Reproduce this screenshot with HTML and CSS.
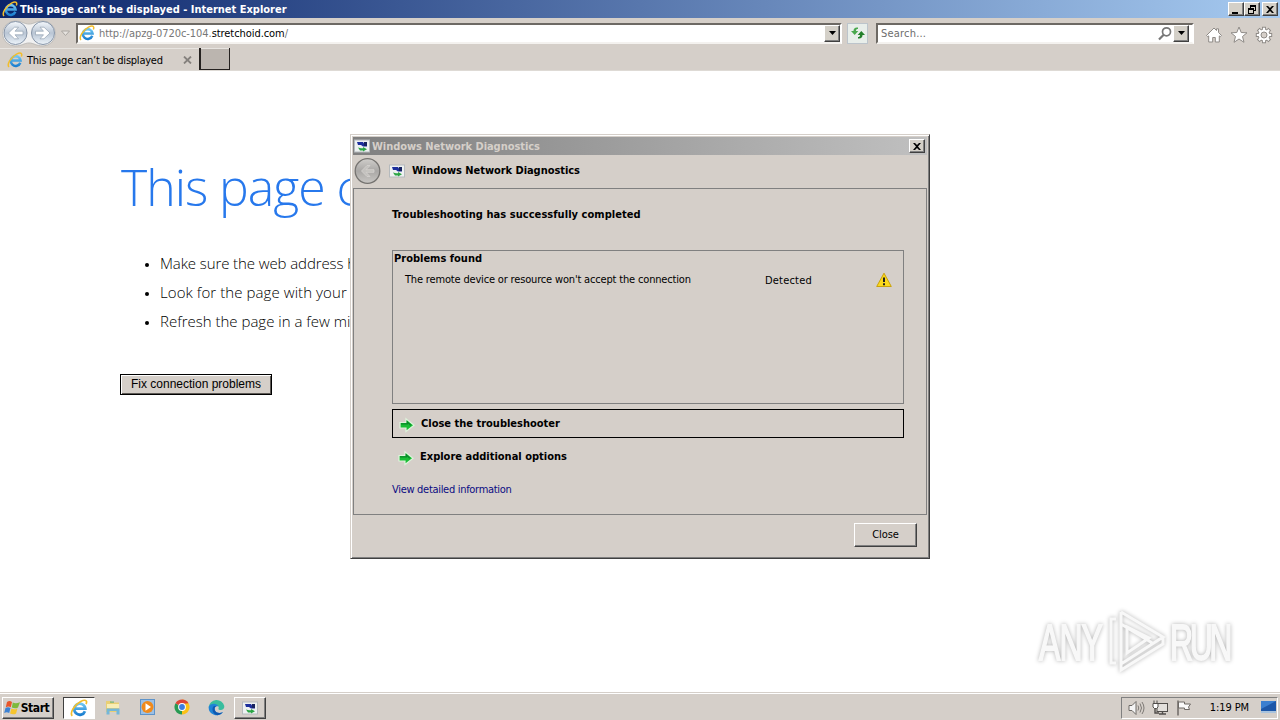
FILE: index.html
```html
<!DOCTYPE html>
<html lang="en">
<head>
    <meta charset="UTF-8">
    <title>This page can't be displayed</title>
    <link rel="stylesheet" href="styles.css">
</head>
<body>
    <svg class="defs" width="0" height="0">
        <defs>
            <linearGradient id="ie-blue" x1="0" y1="0" x2="0" y2="1">
                <stop offset="0" stop-color="#6fc6f2"/>
                <stop offset="1" stop-color="#1c7fd0"/>
            </linearGradient>
            <linearGradient id="orb" x1="0" y1="0" x2="0" y2="1">
                <stop offset="0" stop-color="#f4f8fc"/>
                <stop offset="0.5" stop-color="#b9c5d4"/>
                <stop offset="1" stop-color="#edf4fa"/>
            </linearGradient>
            <linearGradient id="orb-off" x1="0" y1="0" x2="0" y2="1">
                <stop offset="0" stop-color="#d0cecb"/>
                <stop offset="0.5" stop-color="#a9a7a5"/>
                <stop offset="1" stop-color="#c9c7c4"/>
            </linearGradient>
        </defs>
        <symbol id="ie" viewBox="0 0 16 16">
            <path d="M13.300 10.800A4.900 4.900 0 1 1 13.600 8.600H5" fill="none" stroke="url(#ie-blue)" stroke-width="2.500"/>
            <path d="M2 15C-.5 12.500 4 5 9.500 2.200c3.800-2 6.300-1.200 4.800 2.300" fill="none" stroke="#f2bd2c" stroke-width="1.500"/>
        </symbol>
        <symbol id="diag" viewBox="0 0 16 16">
            <rect x="0.500" y="2" width="15" height="12" fill="#eef1f1" stroke="#b5babd"/>
            <path d="M3 4h6l1 1.500h3V8.500H9L7 7H4z" fill="#1c2e9c"/>
            <path d="M10 4h3v4h-3z" fill="#17235f"/>
            <path d="M4 9.500l3 .8h2V9l4 2.300-4 2.200v-1H6z" fill="#2aa544"/>
        </symbol>
        <symbol id="go" viewBox="0 0 16 16">
            <path d="M1 5.500H7V1.800L15 8.200 7 14.500V11H1z" fill="#19bd35" stroke="#dff3dc" stroke-width="1.200"/>
            <path d="M2 6.800h6.300V5l3.500 3.200" fill="none" stroke="#0a8a2a" stroke-width="1.300"/>
        </symbol>
        <symbol id="close-x" viewBox="0 0 8 7">
            <path d="M0 0h2l2 2 2-2h2L5 3.500 8 7H6L4 5 2 7H0l3-3.500z"/>
        </symbol>
    </svg>

    <div class="desktop">
        <header class="titlebar">
            <svg class="icon16"><use href="#ie"/></svg>
            <span class="titlebar-text">This page can’t be displayed - Internet Explorer</span>
            <div class="win-buttons">
                <span class="win-btn"><svg width="10" height="9"><path d="M1 7h6v2H1z"/></svg></span>
                <span class="win-btn"><svg width="10" height="9"><path d="M3 0h6v6H7V5h1V2H4v1H3zM1 3h6v6H1zM2 5v3h4V5z" fill-rule="evenodd"/></svg></span>
                <span class="win-btn win-btn-close"><svg width="8" height="7"><use href="#close-x"/></svg></span>
            </div>
        </header>

        <nav class="navbar">
            <svg class="orbs" width="74" height="28" viewBox="0 0 74 28">
                <path d="M15 2c7 0 9 3 14 3s7-3 14-3a12.500 12.500 0 0 1 0 25c-7 0-9-3-14-3s-7 3-14 3a12.500 12.500 0 0 1 0-25z" fill="#f1f1f1" stroke="#bdbbb8"/>
                <circle cx="15.500" cy="14" r="11.500" fill="url(#orb)" stroke="#8795a8"/>
                <circle cx="43" cy="14" r="11.500" fill="url(#orb)" stroke="#8795a8"/>
                <path d="M23 12.200h-8l3.500-4H14.500L8.500 14l6 5.800h4l-3.500-4h8z" fill="#fff" stroke="#94a2b2" stroke-width="0.700"/>
                <path d="M35.500 12.200h8l-3.500-4h4l6 5.800-6 5.800h-4l3.500-4h-8z" fill="#fff" stroke="#94a2b2" stroke-width="0.700"/>
                <path d="M61.500 12h8l-4 4.500z" fill="#e6e3df" stroke="#aaa6a1"/>
            </svg>
            <div class="field address">
                <svg class="icon16"><use href="#ie"/></svg>
                <span class="url">http://apzg-0720c-104.<b>stretchoid.com</b>/</span>
                <span class="drop"><svg width="7" height="4"><path d="M0 0h7L3.500 4z"/></svg></span>
            </div>
            <span class="refresh">
                <svg width="16" height="14" viewBox="0 0 16 14">
                    <path d="M8 1.500C5 1 3.500 2.500 3.500 5H1l3.700 4L8.300 5H6C6 3.500 6.500 3 8 3z" fill="#4aa84e"/>
                    <path d="M8 12.500c3 .5 4.500-1 4.500-3.500H15l-3.700-4L7.700 9H10c0 1.500-.5 2-2 2z" fill="#23802b"/>
                </svg>
            </span>
            <div class="field search">
                <span class="search-text">Search...</span>
                <svg width="15" height="15" viewBox="0 0 15 15"><circle cx="8.500" cy="5.800" r="4" fill="none" stroke="#777" stroke-width="1.700"/><path d="M5.700 8.800L1 13.500" stroke="#777" stroke-width="2.200"/></svg>
                <span class="drop"><svg width="7" height="4"><path d="M0 0h7L3.500 4z"/></svg></span>
            </div>
            <div class="tools">
                <svg width="18" height="18" viewBox="0 0 18 18"><path d="M1.500 9.500L9 2l2.500 2.500V2.800h2v3.700l3 3-1.300 1.200-.9-.8V16h-4v-4.500H7.700V16h-4V9.900l-.9.8z" fill="#fff" stroke="#8f8b87"/></svg>
                <svg width="18" height="18" viewBox="0 0 18 18"><path d="M9 1l2.200 5.500 5.800.3-4.500 3.700 1.500 5.800L9 13l-5 3.300 1.500-5.800L1 6.800l5.800-.3z" fill="#fff" stroke="#8f8b87"/></svg>
                <svg width="18" height="18" viewBox="0 0 18 18">
                    <g id="cog" stroke-linecap="butt">
                        <path d="M9 .8v16.400M.8 9h16.400M3.200 3.200l11.600 11.600M14.800 3.200L3.200 14.800" stroke="#8f8b87" stroke-width="4"/>
                        <circle cx="9" cy="9" r="6.300" fill="#8f8b87"/>
                        <path d="M9 1.800v14.400M1.800 9h14.400M3.900 3.900l10.200 10.200M14.100 3.900L3.900 14.100" stroke="#fff" stroke-width="2.200"/>
                        <circle cx="9" cy="9" r="5.400" fill="#fff"/>
                        <circle cx="9" cy="9" r="3" fill="#d5cfc9" stroke="#8f8b87"/>
                    </g>
                </svg>
            </div>
        </nav>

        <div class="tabs">
            <div class="tab">
                <svg class="icon16"><use href="#ie"/></svg>
                <span class="tab-text">This page can’t be displayed</span>
                <svg width="9" height="8" viewBox="0 0 9 8"><path d="M1 .5l7 7M8 .5l-7 7" stroke="#85817d" stroke-width="1.800"/></svg>
            </div>
            <div class="new-tab"></div>
        </div>

        <main class="page">
            <h1>This page c</h1>
            <ul>
                <li class="tip-address">Make sure the web address h</li>
                <li class="tip-search">Look for the page with your</li>
                <li>Refresh the page in a few mi</li>
            </ul>
            <button class="fix" type="button">Fix connection problems</button>
        </main>

        <footer class="taskbar">
            <div class="start">
                <svg width="17" height="16" viewBox="0 0 17 16">
                    <path d="M3 2c2-1.500 3.500-1 5 0L6.800 7.200c-1.600-1-3.200-1-5 0z" fill="#e8562a"/>
                    <path d="M8.800 2.500c2 1 3.900 1 7.200-.3l-2 5.300c-2 1.200-4 1-6.200 0z" fill="#7dba3b"/>
                    <path d="M1.500 8.100c1.800-1.200 3.400-1 5 0L5.200 13c-1.600-1-3.200-1-5 0z" fill="#3c82d4"/>
                    <path d="M7.400 8.400c2 1 3.800 1.200 6 0l-1.300 5c-2 1.200-4 1-6 0z" fill="#f6c52e"/>
                </svg>
                <span>Start</span>
            </div>
            <div class="task task-active"><svg class="task-ie"><use href="#ie"/></svg></div>
            <div class="pins">
                <svg width="16" height="16" viewBox="0 0 16 16">
                    <path d="M1 2h5l1 1.500h7V13H1z" fill="#e9cf74"/>
                    <path d="M2 5h12v4H2z" fill="#f8edb5"/>
                    <path d="M5 2.500h4v1.200H5z" fill="#6fb27a"/>
                    <path d="M1.500 15.500V9.500h13v6h-3v-3.500h-7v3.500z" fill="#75b7d8"/>
                </svg>
                <svg width="17" height="17" viewBox="0 0 17 17">
                    <rect x="1.500" y="0.500" width="14" height="15" fill="#9cc0e5" stroke="#5e93c9"/>
                    <circle cx="8.500" cy="8" r="6" fill="#f08a1c"/>
                    <path d="M6.500 4.300L12 8l-5.500 3.700z" fill="#fff"/>
                </svg>
                <svg width="16" height="16" viewBox="0 0 16 16">
                    <path d="M8 8V.5A7.500 7.500 0 0 1 14.500 4.250 7.500 7.500 0 0 1 8 15.500z" fill="#fbc116"/>
                    <path d="M8 8v7.500A7.500 7.500 0 0 1 1.500 4.250z" fill="#279a52"/>
                    <path d="M8 8L1.500 4.250A7.500 7.500 0 0 1 14.500 4.250L8 5z" fill="#dd4437"/>
                    <circle cx="8" cy="8" r="3.900" fill="#fff"/>
                    <circle cx="8" cy="8" r="2.900" fill="#3d7de0"/>
                </svg>
                <svg width="17" height="17" viewBox="0 0 17 17">
                    <path d="M.6 8A8 8 0 0 1 16.300 7c.3 3-2 4.300-4.300 4-1.500-.2-2-1-1.300-2C11.500 6 4 3.500.6 8z" fill="#39bd9e"/>
                    <path d="M.6 8C2 4 9 3.500 10.500 7.500 7.500 6.500 6 9 7 11.500c1.500 3 5.500 3 8 1.500A8 8 0 0 1 .6 8z" fill="#1f83d6"/>
                    <path d="M5 8c-1.500 3.500.5 7.500 4.500 8.300A8 8 0 0 0 15 13c-2.500 1.500-6.500 1.500-8-1.500C6 9.500 6.800 7.800 8 7.200 6.800 6.700 5.500 7 5 8z" fill="#0f58b0"/>
                </svg>
            </div>
            <div class="task"><svg class="icon16"><use href="#diag"/></svg></div>
            <div class="tray">
                <svg width="17" height="16" viewBox="0 0 17 16"><path d="M1 5.500h3L8 1.500v13l-4-4H1z" fill="#f5f5f5" stroke="#6e6a66"/><path d="M10 5.500q1.500 2.500 0 5M12 3.500q3 4.500 0 9M14 2q4 6 0 12" fill="none" stroke="#7d7975"/></svg>
                <svg width="17" height="16" viewBox="0 0 17 16"><rect x="5" y="3.500" width="10.500" height="8" fill="#e3e0dc" stroke="#514e4b"/><path d="M7 14h7M10.500 12v2M3 8v5h4" fill="none" stroke="#514e4b" stroke-width="1.400"/><path d="M1 3.500h5V7l-1.500 1.500h-2L1 7zM2 .5v3M5 .5v3" fill="#fff" stroke="#514e4b"/></svg>
                <svg width="17" height="16" viewBox="0 0 17 16"><path d="M2.500 2h6v2h6l-2 3 1 2.500h-5V8h-6z" fill="#fafafa" stroke="#6e6a66"/><path d="M2 .5v15" stroke="#6e6a66" stroke-width="1.500"/></svg>
                <span class="clock">1:19 PM</span>
                <svg width="15" height="13" viewBox="0 0 15 13"><path d="M0 0h15v10H0z" fill="#1d57a8"/><path d="M0 0h15L0 8z" fill="#3b7fd0"/><path d="M0 10h15v2H0z" fill="#a9c3dd"/></svg>
            </div>
        </footer>
    </div>

    <section class="dialog">
        <div class="dialog-inner">
            <div class="dialog-title">
                <svg class="icon16"><use href="#diag"/></svg>
                <span class="dialog-title-text">Windows Network Diagnostics</span>
                <span class="win-btn win-btn-close"><svg width="8" height="7"><use href="#close-x"/></svg></span>
            </div>
            <div class="dialog-head">
                <svg width="28" height="28" viewBox="0 0 28 28">
                    <circle cx="14.500" cy="14" r="12.300" fill="url(#orb-off)" stroke="#757370" stroke-width="1.300"/>
                    <path d="M21 12.700h-8l4-4.200h-3L8.500 14l5.500 5.500h3l-4-4.200h8z" fill="#c3c1be" stroke="#d5d3d0" stroke-width="0.800"/>
                </svg>
                <svg class="icon16"><use href="#diag"/></svg>
                <span class="dialog-head-text">Windows Network Diagnostics</span>
            </div>
            <div class="dialog-body">
                <h2>Troubleshooting has successfully completed</h2>
                <div class="problems">
                    <div class="problems-title">Problems found</div>
                    <div class="problem">
                        <span class="problem-name">The remote device or resource won't accept the connection</span>
                        <span class="problem-state">Detected</span>
                        <svg width="16" height="16" viewBox="0 0 16 16"><path d="M8 1.200L15.300 14.500H.7z" fill="#fbd91d" stroke="#c9a20b" stroke-linejoin="round"/><path d="M7 5.500h2v4.500H7zM7 11.300h2v2H7z" fill="#222"/></svg>
                    </div>
                </div>
                <div class="option option-focus">
                    <svg class="icon16"><use href="#go"/></svg>
                    <span>Close the troubleshooter</span>
                </div>
                <div class="option">
                    <svg class="icon16"><use href="#go"/></svg>
                    <span>Explore additional options</span>
                </div>
                <a class="details">View detailed information</a>
            </div>
            <div class="dialog-foot">
                <button class="btn-close" type="button">Close</button>
            </div>
        </div>
    </section>

    <svg class="watermark" width="210" height="76" viewBox="0 0 210 76">
        <g class="mark">
            <text transform="translate(9 58) scale(0.760 1.200)" textLength="84">ANY</text>
            <text transform="translate(140 58) scale(0.760 1.200)" textLength="82">RUN</text>
            <path d="M91 10L133 35 91 62V10M91 11v11l33 20M86 17h-5v44h5M91 62v6l42-26v-7M97 25v26l22-15z"/>
        </g>
    </svg>
</body>
</html>
```
FILE: styles.css
```css
* {
    box-sizing: border-box;
}

body {
    margin: 0;
    width: 1280px;
    height: 720px;
    overflow: hidden;
    position: relative;
    background: #fff;
    color: #000;
    font-family: "DejaVu Sans Condensed", "DejaVu Sans", sans-serif;
    font-stretch: condensed;
    font-size: 11px;
    line-height: 14px;
}

svg {
    display: block;
    flex: none;
}

span,
h1,
h2,
li {
    white-space: nowrap;
}

.defs {
    position: absolute;
}

.icon16 {
    width: 16px;
    height: 16px;
}

.desktop {
    height: 720px;
    display: flex;
    flex-direction: column;
}

/* browser chrome */
.titlebar {
    height: 18px;
    display: flex;
    align-items: center;
    gap: 2px;
    padding: 0 2px;
    background: linear-gradient(to right, #0a246a, #a6caf0);
    color: #fff;
    font-weight: bold;
}

.titlebar-text {
    flex: 1;
    padding-top: 1px;
}

.win-buttons {
    display: flex;
}

.win-btn {
    width: 16px;
    height: 14px;
    display: flex;
    align-items: center;
    justify-content: center;
    background: #d4d0c8;
    border: 1px solid;
    border-color: #fff #404040 #404040 #fff;
    box-shadow: inset -1px -1px #808080;
}

.win-buttons .win-btn-close {
    margin-left: 2px;
}

.navbar {
    height: 30px;
    display: flex;
    align-items: center;
    background: #d5cfc9;
}

.orbs {
    margin-right: 2px;
}

.field {
    height: 21px;
    display: flex;
    align-items: center;
    background: #fff;
    border: 2px solid;
    border-color: #6d6964 #fff #f4f2ef #6d6964;
}

.address {
    width: 766px;
    padding-left: 1px;
    gap: 4px;
}

.url {
    flex: 1;
    padding-top: 2px;
    color: #777;
    letter-spacing: -0.06px;
}

.url b {
    color: #000;
    font-weight: normal;
}

.drop {
    width: 16px;
    height: 17px;
    display: flex;
    align-items: center;
    justify-content: center;
    background: #d4d0c8;
    border: 1px solid;
    border-color: #fff #404040 #404040 #fff;
    box-shadow: inset -1px -1px #808080;
}

.refresh {
    width: 21px;
    height: 21px;
    margin: 0 8px 0 5px;
    display: flex;
    align-items: center;
    justify-content: center;
    background: #e8eeea;
    border: 1px solid #bcc4cb;
}

.search {
    width: 318px;
    padding: 0 3px;
}

.search-text {
    flex: 1;
    padding-top: 2px;
    color: #6d6d6d;
    letter-spacing: 0.2px;
}

.tools {
    display: flex;
    gap: 7px;
    margin: 4px 0 0 11px;
}

.tabs {
    height: 23px;
    display: flex;
    background: #d5cfc9;
    border-bottom: 1px solid #dedad5;
}

.tab {
    width: 199px;
    display: flex;
    align-items: center;
    padding: 1px 7px 0;
    gap: 4px;
    border-top: 1px solid #e8e5e1;
}

.tab-text {
    flex: 1;
    padding-top: 2px;
    letter-spacing: -0.23px;
}

.new-tab {
    width: 31px;
    height: 22px;
    background: #bbb5af;
    border: solid #24211f;
    border-width: 0 1px 1px 2px;
    box-shadow: inset 0 1px #e7e4e0;
}

/* error page */
.page {
    flex: 1;
    padding: 81px 0 0 121px;
    font-family: "Open Sans", "Noto Sans", sans-serif;
    font-stretch: normal;
    font-weight: 300;
}

.page h1 {
    margin: 0;
    font-size: 50px;
    line-height: 70px;
    font-weight: 300;
    color: #2778ec;
    letter-spacing: -1.05px;
}

.page ul {
    margin: 27px 0 0;
    padding: 0 0 0 39px;
    font-size: 15px;
    line-height: 29px;
}

.page li::marker {
    font-size: 11px;
}

.tip-address {
    letter-spacing: -0.1px;
}

.tip-search {
    letter-spacing: 0.08px;
}

.fix {
    display: block;
    width: 152px;
    height: 21px;
    margin: 38px 0 0 -1px;
    padding: 0 0 2px;
    font: 12px "Liberation Sans", Arial, sans-serif;
    color: #000;
    background: #d5cfc9;
    border: 1px solid #000;
    box-shadow: inset 1px 1px #fff, inset -1px -1px #5c5854;
}

/* taskbar */
.taskbar {
    height: 28px;
    display: flex;
    align-items: center;
    padding: 2px 2px 0;
    background: #d5cfc9;
    border-top: 1px solid #d5cfc9;
    box-shadow: inset 0 1px #fff;
}

.start,
.task {
    height: 22px;
    display: flex;
    align-items: center;
    justify-content: center;
    border: 1px solid;
    border-color: #fff #404040 #404040 #fff;
    box-shadow: inset -1px -1px #808080;
}

.start {
    width: 52px;
    padding-right: 3px;
    font-size: 12px;
    font-weight: bold;
    letter-spacing: -0.4px;
}

.task {
    width: 32px;
}

.task-active {
    margin-left: 9px;
    background: #fff;
    border-color: #404040 #fff #fff #404040;
    box-shadow: none;
}

.task-ie {
    width: 18px;
    height: 18px;
}

.pins {
    display: flex;
    gap: 18px;
    margin: 0 9px 0 10px;
}

.tray {
    height: 22px;
    display: flex;
    align-items: center;
    gap: 7px;
    width: 157px;
    margin-left: auto;
    padding: 0 1px 0 6px;
    border: 1px solid;
    border-color: #808080 #fff #fff #808080;
}

.clock {
    flex: 1;
    text-align: right;
    padding-right: 5px;
    letter-spacing: -0.1px;
}

/* troubleshooter window */
.dialog {
    position: absolute;
    left: 350px;
    top: 134px;
    width: 580px;
    height: 425px;
    background: #d5cfc9;
    border: 1px solid;
    border-color: #d5cfc9 #404040 #404040 #d5cfc9;
    box-shadow: inset 1px 1px #fff, inset -1px -1px #808080;
}

.dialog-inner {
    height: 100%;
    padding: 2px;
    display: flex;
    flex-direction: column;
}

.dialog-title {
    height: 18px;
    display: flex;
    align-items: center;
    gap: 2px;
    padding: 0 2px 0 1px;
    background: linear-gradient(to right, #808080, #c0c0c0);
    color: #d5cfc9;
    font-weight: bold;
}

.dialog-title-text {
    flex: 1;
    padding-top: 1px;
    letter-spacing: -0.05px;
}

.dialog-head {
    height: 33px;
    display: flex;
    align-items: center;
    padding-bottom: 2px;
    font-weight: bold;
}

.dialog-head .icon16 {
    margin: 0 7px 0 8px;
}

.dialog-head-text {
    padding-top: 1px;
    letter-spacing: -0.05px;
}

.dialog-body {
    height: 327px;
    padding: 19px 22px 0 38px;
    border: 1px solid #808080;
}

.dialog h2 {
    margin: 0 0 28px;
    font-size: 11px;
    line-height: 14px;
    letter-spacing: 0.05px;
}

.problems {
    height: 154px;
    padding: 1px;
    border: 1px solid #808080;
}

.problems-title {
    font-weight: bold;
}

.problem {
    height: 28px;
    display: flex;
    align-items: center;
    padding: 0 10px 0 11px;
}

.problem-name {
    width: 360px;
    letter-spacing: -0.17px;
}

.problem-state {
    flex: 1;
    padding-top: 1px;
    letter-spacing: 0.2px;
}

.option {
    height: 29px;
    display: flex;
    align-items: center;
    gap: 6px;
    margin-top: 4px;
    padding: 0 6px;
    font-weight: bold;
}

.option .icon16 {
    margin-top: 2px;
}

.option-focus {
    margin-top: 5px;
    border: 1px solid #000;
}

.details {
    display: inline-block;
    margin-top: 12px;
    color: #0b0b82;
    white-space: nowrap;
    letter-spacing: -0.3px;
}

.dialog-foot {
    flex: 1;
    display: flex;
    justify-content: flex-end;
    padding: 8px 10px;
}

.btn-close {
    width: 63px;
    height: 24px;
    padding: 0;
    font: inherit;
    color: #000;
    background: #d5cfc9;
    border: 1px solid;
    border-color: #fff #404040 #404040 #fff;
    box-shadow: inset -1px -1px #808080;
    letter-spacing: -0.1px;
}

.watermark {
    position: absolute;
    left: 1030px;
    top: 602px;
    filter: drop-shadow(0 0 2px rgba(0, 0, 0, 0.3));
}

.mark text {
    font-family: "Liberation Sans", Arial, sans-serif;
    font-size: 42px;
    fill: #f8f8f8;
    stroke: #f8f8f8;
    stroke-width: 1.5;
}

.mark path {
    fill: none;
    stroke: #f8f8f8;
    stroke-width: 3;
}
```
